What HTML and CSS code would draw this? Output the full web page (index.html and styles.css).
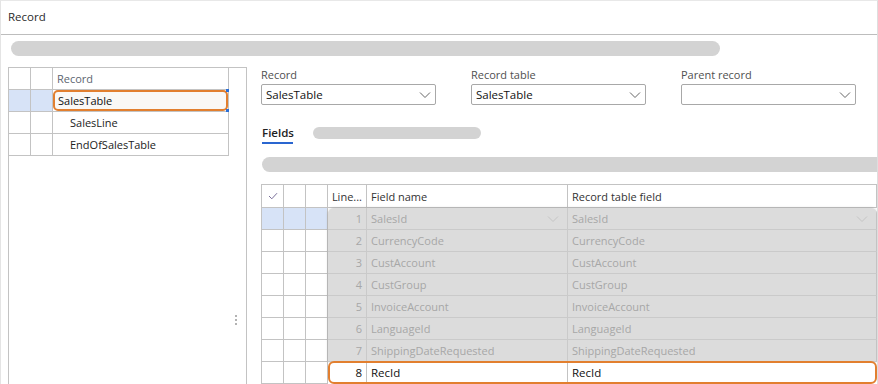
FILE: index.html
```html
<!DOCTYPE html>
<html>
<head>
<meta charset="utf-8">
<link rel="stylesheet" href="styles.css">
</head>
<body>
<div class="frame">
  <div class="titlebar">Record</div>
  <div class="content">
    <div class="ph-bar"></div>
    <div class="main">
      <div class="left">
        <div class="tree">
          <div class="tc"></div><div class="tc"></div><div class="tc th">Record</div>
          <div class="tc sel"></div><div class="tc sel"></div><div class="tc"><div class="focus">SalesTable<span class="mk mk1"></span><span class="mk mk2"></span></div></div>
          <div class="tc"></div><div class="tc"></div><div class="tc ind">SalesLine</div>
          <div class="tc"></div><div class="tc"></div><div class="tc ind">EndOfSalesTable</div>
        </div>
        <div class="splitter"><span></span><span></span><span></span></div>
      </div>
      <div class="right">
        <div class="fields">
          <div class="field">
            <div class="lbl">Record</div>
            <div class="dd"><span>SalesTable</span><svg width="12" height="8" viewBox="0 0 12 8"><path d="M1 1.5 6 6.5 11 1.5" fill="none" stroke="#666" stroke-width="1"/></svg></div>
          </div>
          <div class="field">
            <div class="lbl">Record table</div>
            <div class="dd"><span>SalesTable</span><svg width="12" height="8" viewBox="0 0 12 8"><path d="M1 1.5 6 6.5 11 1.5" fill="none" stroke="#666" stroke-width="1"/></svg></div>
          </div>
          <div class="field">
            <div class="lbl">Parent record</div>
            <div class="dd"><span></span><svg width="12" height="8" viewBox="0 0 12 8"><path d="M1 1.5 6 6.5 11 1.5" fill="none" stroke="#666" stroke-width="1"/></svg></div>
          </div>
        </div>
        <div class="tabs">
          <div class="tab">Fields</div>
          <div class="ph-pill"></div>
        </div>
        <div class="ph-wide"></div>
        <div class="grid">
          <div class="lgrid">
            <div class="gc chk hd"><svg width="10" height="8" viewBox="0 0 10 8"><path d="M1 4 3.8 6.8 9 1.2" fill="none" stroke="#7a6f9a" stroke-width="1"/></svg></div><div class="gc hd"></div><div class="gc hd"></div>
            <div class="gc sel"></div><div class="gc sel"></div><div class="gc sel"></div>
            <div class="gc"></div><div class="gc"></div><div class="gc"></div>
            <div class="gc"></div><div class="gc"></div><div class="gc"></div>
            <div class="gc"></div><div class="gc"></div><div class="gc"></div>
            <div class="gc"></div><div class="gc"></div><div class="gc"></div>
            <div class="gc"></div><div class="gc"></div><div class="gc"></div>
            <div class="gc"></div><div class="gc"></div><div class="gc"></div>
            <div class="gc"></div><div class="gc"></div><div class="gc"></div>
          </div>
          <div class="rgrid">
            <div class="grow head">
              <div class="c num">Line...</div><div class="c name">Field name</div><div class="c rtf">Record table field</div>
            </div>
            <div class="group">
              <div class="grow dis"><div class="c num">1</div><div class="c name">SalesId<svg width="12" height="8" viewBox="0 0 12 8"><path d="M1 1.5 6 6.5 11 1.5" fill="none" stroke="#c4c4c4" stroke-width="1"/></svg></div><div class="c rtf">SalesId<svg width="12" height="8" viewBox="0 0 12 8"><path d="M1 1.5 6 6.5 11 1.5" fill="none" stroke="#c4c4c4" stroke-width="1"/></svg></div></div>
              <div class="grow dis"><div class="c num">2</div><div class="c name">CurrencyCode</div><div class="c rtf">CurrencyCode</div></div>
              <div class="grow dis"><div class="c num">3</div><div class="c name">CustAccount</div><div class="c rtf">CustAccount</div></div>
              <div class="grow dis"><div class="c num">4</div><div class="c name">CustGroup</div><div class="c rtf">CustGroup</div></div>
              <div class="grow dis"><div class="c num">5</div><div class="c name">InvoiceAccount</div><div class="c rtf">InvoiceAccount</div></div>
              <div class="grow dis"><div class="c num">6</div><div class="c name">LanguageId</div><div class="c rtf">LanguageId</div></div>
              <div class="grow dis last"><div class="c num">7</div><div class="c name">ShippingDateRequested</div><div class="c rtf">ShippingDateRequested</div></div>
            </div>
            <div class="grow active"><div class="c num">8</div><div class="c name">RecId</div><div class="c rtf">RecId</div></div>
          </div>
        </div>
      </div>
    </div>
  </div>
</div>
</body>
</html>
```

FILE: styles.css
```css
* { box-sizing: border-box; }
html, body { margin: 0; padding: 0; background: #fff; }
body {
  font-family: "Open Sans", "Noto Sans", sans-serif;
  font-size: 11px;
  color: #222;
  overflow: hidden;
}
.frame {
  width: 878px;
  height: 384px;
  border-top: 1px solid #e8e8e8;
  border-left: 1px solid #e4e4e4;
  border-right: 1px solid #dedede;
  overflow: hidden;
}
.titlebar {
  height: 34px;
  line-height: 32px;
  padding-left: 7px;
  border-bottom: 1px solid #bdbdbd;
  font-size: 11.5px;
  color: #2b2b2b;
}
.content { padding: 6px 0 0 7px; }
.ph-bar {
  margin-left: 3px;
  width: 709px;
  height: 15px;
  border-radius: 8px;
  background: #d3d3d3;
}
.main { display: flex; margin-top: 11px; }
.left {
  flex-shrink: 0;
  width: 239px;
  height: 330px;
  border: 1px solid #c3c3c3;
  border-bottom: none;
  display: flex;
  flex-direction: column;
}
.tree {
  display: grid;
  grid-template-columns: 22px 22px 176px;
  grid-auto-rows: 22px;
  width: 220px;
  border-bottom: 1px solid #c3c3c3;
  border-right: 1px solid #c3c3c3;
  margin-top: -1px;
}
.tc {
  border-right: 1px solid #c3c3c3;
  border-top: 1px solid #c3c3c3;
  display: flex;
  align-items: center;
  padding-left: 4px;
  white-space: nowrap;
}
.tc:nth-child(3n) { border-right: none; }
.tc.th { color: #5d6570; }
.tc.sel { background: #d7e3f7; }
.tc.ind { padding-left: 17px; }
.focus {
  position: relative;
  margin-left: -4px;
  width: 175px;
  height: 21px;
  border: 2px solid #e27f2f;
  border-radius: 5px;
  background: #faf8f6;
  padding-left: 3px;
  display: flex;
  align-items: center;
  color: #111;
}
.mk { position: absolute; width: 3px; height: 3px; background: #2b6fd6; right: -3px; }
.mk1 { top: -3px; }
.mk2 { bottom: -3px; }
.splitter {
  align-self: flex-end;
  margin: 159px 9px 0 0;
  display: flex;
  flex-direction: column;
  gap: 2px;
}
.splitter span { width: 2px; height: 2px; background: #9a9a9a; border-radius: 1px; }

.right { margin-left: 14px; flex: 1; min-width: 0; }
.fields { display: flex; gap: 35px; margin-top: 1px; }
.field { width: 175px; flex-shrink: 0; }
.lbl { font-size: 11px; color: #505050; height: 16px; line-height: 14px; }
.dd {
  height: 21px;
  border: 1px solid #a8a8a8;
  border-radius: 2px;
  display: flex;
  align-items: center;
  justify-content: space-between;
  padding: 0 4px 0 4px;
  color: #111;
  font-size: 11.5px;
}
.tabs { display: flex; align-items: flex-start; margin-top: 20px; height: 21px; }
.tab {
  margin-left: 1px;
  font-weight: 600;
  font-size: 11.5px;
  line-height: 16px;
  padding-bottom: 1px;
  border-bottom: 2px solid #2a66d0;
  width: 31px;
  white-space: nowrap;
}
.ph-pill {
  margin-left: 20px;
  margin-top: 2px;
  width: 168px;
  height: 12px;
  border-radius: 6px;
  background: #d3d3d3;
}
.ph-wide {
  margin-top: 11px;
  margin-left: 1px;
  width: 640px;
  height: 15px;
  border-radius: 8px;
  background: #d3d3d3;
}
.grid {
  display: flex;
  margin-top: 12px;
  width: 616px;
  border-top: 1px solid #c3c3c3;
  border-left: 1px solid #c3c3c3;
}
.lgrid {
  display: grid;
  grid-template-columns: 22px 22px 22px;
  grid-template-rows: 23px;
  grid-auto-rows: 22px;
  width: 66px;
  flex-shrink: 0;
}
.gc { border-right: 1px solid #c3c3c3; border-bottom: 1px solid #c3c3c3; display: flex; align-items: center; justify-content: center; }
.gc.sel { background: #d7e3f7; }
.rgrid { flex: 1; display: flex; flex-direction: column; }
.grow { display: flex; height: 22px; }
.grow.head { height: 23px; }
.c {
  display: flex;
  align-items: center;
  white-space: nowrap;
  overflow: hidden;
  border-right: 1px solid #c3c3c3;
  border-bottom: 1px solid #c3c3c3;
  padding-left: 4px;
}
.c.num { width: 39px; flex-shrink: 0; justify-content: flex-end; padding-right: 4px; padding-left: 0; }
.c.name { width: 201px; flex-shrink: 0; justify-content: space-between; padding-right: 8px; }
.c.rtf { flex: 1; justify-content: space-between; padding-right: 8px; }
.head .c { color: #333; }
.group {
  background: #dcdcdc;
  border-radius: 6px 6px 0 0;
  box-shadow: 0 0 3px rgba(0,0,0,0.18);
  overflow: hidden;
}
.dis .c { color: #a7a7a7; border-color: #cacaca; }
.dis .c.rtf { border-right: 1px solid #c3c3c3; }
.active {
  border: 2px solid #e27f2f;
  border-radius: 6px;
  height: 23px;
  margin-top: -1px;
  background: #fff;
}
.active .c { border-bottom: none; color: #111; font-size: 11.5px; }
.active .c.num { width: 37px; }
.active .c.rtf { border-right: none; }
```
